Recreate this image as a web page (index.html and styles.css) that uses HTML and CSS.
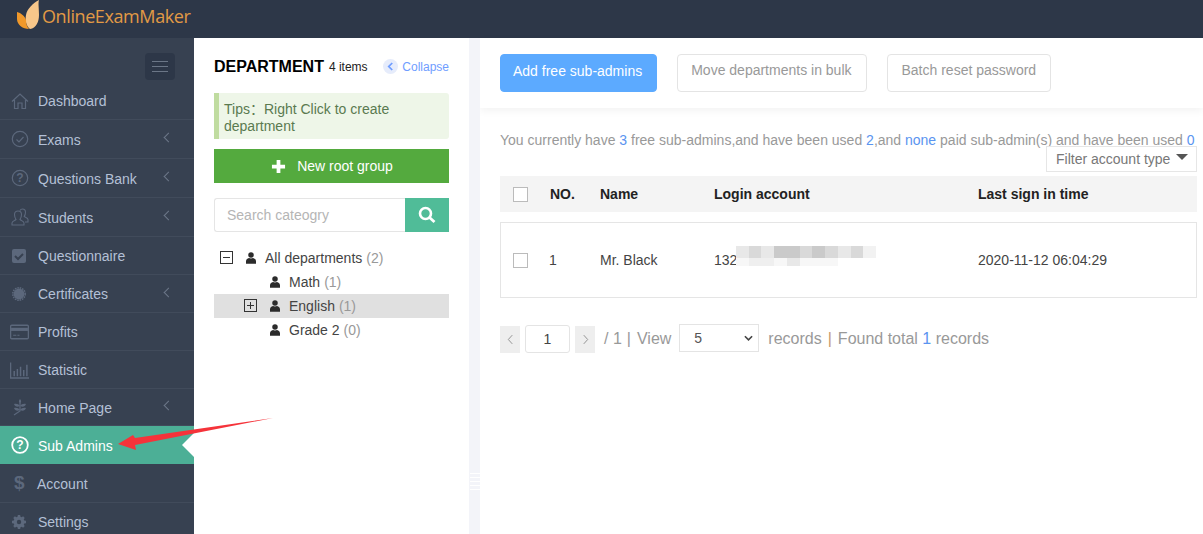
FILE: index.html
```html
<!DOCTYPE html>
<html lang="en">
<head>
<meta charset="utf-8">
<title>Sub Admins - OnlineExamMaker</title>
<link rel="stylesheet" href="styles.css">
</head>
<body>
<div class="app">
  <header class="topbar">
    <svg class="logo-mark" viewBox="0 0 24 29" width="24" height="29"><path d="M14 29C20 28 23 22 23 15 23 8 22 3 23 0 17 3 11 9 10 15 9 20 10 26 14 29Z" fill="#f8c78a"/><path d="M1 12C5 13 9 16 10 20 10 24 11 27 13 29 7 29 1 25 1 19 1 16 1 14 1 12Z" fill="#f0982a"/></svg>
    <span class="logo-text">OnlineExamMaker</span>
  </header>
  <div class="body">
    <nav class="sidebar">
      <div class="toggle-wrap">
        <div class="toggle"><span></span><span></span><span></span></div>
      </div>
      <ul class="menu">
        <li class="item"><svg class="ico" viewBox="0 0 18 18"><path d="M1 9.500 9 2l8 7.500M3.500 8v8.500h3.500V11h4v5.500h3.500V8" fill="none" stroke="#5c687c" stroke-width="1.200"/></svg>Dashboard</li>
        <li class="item low"><svg class="ico" viewBox="0 0 18 18"><circle cx="9" cy="9" r="7.700" fill="none" stroke="#5c687c" stroke-width="1.200"/><path d="M5.500 9.500 8 12l4.500-5" fill="none" stroke="#5c687c" stroke-width="1.200"/></svg>Exams<span class="chev"></span></li>
        <li class="item low"><svg class="ico" viewBox="0 0 18 18"><circle cx="9" cy="9" r="7.700" fill="none" stroke="#5c687c" stroke-width="1.200"/><text x="9" y="13" class="q-mark">?</text></svg>Questions Bank<span class="chev"></span></li>
        <li class="item low"><svg class="ico" viewBox="0 0 18 18"><path d="M1 17v-2c0-2 3-2.500 4-3.500C4 10 3.500 8.500 3.500 6.500 3.500 4 5 3 7 3s3.500 1 3.500 3.500c0 2-.5 3.500-1.500 5 1 1 4 1.500 4 3.500v2ZM9 2.500C9.500 1.500 10.500 1 11.500 1c2 0 3 1.200 3 3.200 0 1.800-.5 3-1.300 4.200.8.800 3.800 1.300 3.800 3.100V14h-3" fill="none" stroke="#5c687c" stroke-width="1.100"/></svg>Students<span class="chev"></span></li>
        <li class="item"><svg class="ico ico-sm" viewBox="2 2 14 14"><rect x="2" y="2" width="14" height="14" rx="2" fill="#5c687c"/><path d="M5 9l3 3 5-5" fill="none" stroke="#374151" stroke-width="2"/></svg>Questionnaire</li>
        <li class="item"><svg class="ico ico-sm" viewBox="0 0 18 18"><circle cx="9" cy="9" r="7" fill="#5c687c"/><circle cx="9" cy="9" r="8" fill="none" stroke="#5c687c" stroke-width="2" stroke-dasharray="2 1.140"/></svg>Certificates<span class="chev"></span></li>
        <li class="item"><svg class="ico ico-wide" viewBox="0 0 18 14"><rect x=".6" y=".6" width="16.800" height="12.800" rx="1" fill="none" stroke="#5c687c" stroke-width="1.200"/><rect x="1" y="3" width="16" height="3" fill="#5c687c"/><path d="M3 10h3M7 10h2" stroke="#5c687c"/></svg>Profits</li>
        <li class="item"><svg class="ico ico-wide" viewBox="0 0 18 16"><path d="M.5 1v14.500H18M4 14V9M7 14V7M10 14V5M13 14V8M16 14V3" fill="none" stroke="#5c687c" stroke-width="1.400"/></svg>Statistic</li>
        <li class="item low"><svg class="ico" viewBox="0 0 18 18"><path d="M9 1c1.500 1.500 1.500 3 0 5C7.500 4 7.500 2.500 9 1ZM9 8c1.500-2 3.500-2.500 6-2-1 2.500-3 3.500-6 2ZM9 8C7.500 6 5.500 5.500 3 6c1 2.500 3 3.500 6 2ZM9 12c1.500-2 3.500-2.500 6-2-1 2.500-3 3.500-6 2ZM9 12c-1.500-2-3.500-2.500-6-2 1 2.500 3 3.500 6 2Z" fill="#5c687c"/><path d="M9 5v8L3 17" fill="none" stroke="#5c687c" stroke-width="1.200"/></svg>Home Page<span class="chev"></span></li>
        <li class="item active low"><svg class="ico" viewBox="0 0 18 18"><circle cx="9" cy="9" r="7.800" fill="none" stroke="#fff" stroke-width="1.800"/><text x="9" y="13.200" class="q-mark q-white">?</text></svg>Sub Admins</li>
        <li class="item item-account low"><span class="dollar">$</span>Account</li>
        <li class="item"><svg class="ico ico-sm" viewBox="0 0 18 18"><path d="M7.500 0h3l.4 2.300 1.500.6 1.900-1.300 2.100 2.100-1.300 1.900.6 1.500 2.300.4v3l-2.300.4-.6 1.500 1.300 1.900-2.100 2.100-1.900-1.300-1.500.6-.4 2.300h-3l-.4-2.300-1.500-.6-1.900 1.300-2.100-2.100 1.300-1.900-.6-1.500L0 10.500v-3l2.300-.4.6-1.500L1.600 3.700l2.100-2.100 1.900 1.300 1.500-.6Z" fill="#5c687c"/><circle cx="9" cy="9" r="2.800" fill="#374151"/></svg>Settings</li>
      </ul>
    </nav>

    <aside class="panel">
      <div class="panel-head">
        <h2 class="panel-title">DEPARTMENT</h2>
        <span class="panel-count">4 items</span>
        <span class="collapse"><span class="collapse-dot"><svg viewBox="0 0 8 10" width="7" height="9"><path d="M6 1 2 5l4 4" fill="none" stroke="#6f9dff" stroke-width="2"/></svg></span>Collapse</span>
      </div>
      <div class="tips">Tips：Right Click to create department</div>
      <button class="new-root"><svg viewBox="0 0 16 16" width="15" height="15"><path d="M8 1v14M1 8h14" stroke="#fff" stroke-width="4"/></svg>New root group</button>
      <div class="search">
        <div class="search-input">Search cateogry</div>
        <div class="search-btn"><svg viewBox="0 0 18 18" width="18" height="18"><circle cx="7.500" cy="7.500" r="5.500" fill="none" stroke="#fff" stroke-width="2.600"/><path d="M11.500 11.500 16.500 16" stroke="#fff" stroke-width="2.800"/></svg></div>
      </div>
      <ul class="tree">
        <li class="node node-root"><span class="box"><span class="box-h"></span></span><svg class="user" viewBox="0 0 12 14"><ellipse cx="6" cy="3.300" rx="3.300" ry="3.300" fill="#2b2b2b"/><path d="M0 14V11C0 8.500 2 7.500 3.500 7L6 7.500 8.500 7C10 7.500 12 8.500 12 11V14Z" fill="#2b2b2b"/></svg><span class="node-name">All departments</span><span class="node-num">(2)</span></li>
        <li class="node"><svg class="user" viewBox="0 0 12 14"><ellipse cx="6" cy="3.300" rx="3.300" ry="3.300" fill="#2b2b2b"/><path d="M0 14V11C0 8.500 2 7.500 3.500 7L6 7.500 8.500 7C10 7.500 12 8.500 12 11V14Z" fill="#2b2b2b"/></svg><span class="node-name">Math</span><span class="node-num">(1)</span></li>
        <li class="node node-sel"><span class="box box-child"><span class="box-h"></span><span class="box-v"></span></span><svg class="user" viewBox="0 0 12 14"><ellipse cx="6" cy="3.300" rx="3.300" ry="3.300" fill="#2b2b2b"/><path d="M0 14V11C0 8.500 2 7.500 3.500 7L6 7.500 8.500 7C10 7.500 12 8.500 12 11V14Z" fill="#2b2b2b"/></svg><span class="node-name">English</span><span class="node-num">(1)</span></li>
        <li class="node"><svg class="user" viewBox="0 0 12 14"><ellipse cx="6" cy="3.300" rx="3.300" ry="3.300" fill="#2b2b2b"/><path d="M0 14V11C0 8.500 2 7.500 3.500 7L6 7.500 8.500 7C10 7.500 12 8.500 12 11V14Z" fill="#2b2b2b"/></svg><span class="node-name">Grade 2</span><span class="node-num">(0)</span></li>
      </ul>
    </aside>

    <div class="splitter"><div class="grip"></div></div>

    <main class="main">
      <div class="toolbar">
        <button class="btn btn-primary">Add free sub-admins</button>
        <button class="btn">Move departments in bulk</button>
        <button class="btn btn-batch">Batch reset password</button>
      </div>
      <div class="content">
        <p class="notice">You currently have <b>3</b> free sub-admins,and have been used <b>2</b>,and <b>none</b> paid sub-admin(s) and have been used <b>0</b></p>
        <div class="filter-row"><div class="filter">Filter account type<span class="caret"></span></div></div>
        <div class="thead">
          <span class="cell c-check"><span class="check"></span></span>
          <span class="cell c-no">NO.</span>
          <span class="cell c-name">Name</span>
          <span class="cell c-login">Login account</span>
          <span class="cell">Last sign in time</span>
        </div>
        <div class="trow">
          <span class="cell c-check"><span class="check"></span></span>
          <span class="cell c-no">1</span>
          <span class="cell c-name">Mr. Black</span>
          <span class="cell c-login">132<span class="mosaic"><i></i><i></i><i></i><i></i><i></i><i></i><i></i><i></i><i></i><i></i><i></i><i></i><i></i><i></i><i></i><i></i><i></i><i></i><i></i><i></i><i></i><i></i></span></span>
          <span class="cell">2020-11-12 06:04:29</span>
        </div>
        <div class="pager">
          <span class="pg-arrow"><svg viewBox="0 0 8 12" width="7" height="11"><path d="M6 1 1.500 6 6 11" fill="none" stroke="#888"/></svg></span>
          <span class="pg-input">1</span>
          <span class="pg-arrow"><svg viewBox="0 0 8 12" width="7" height="11"><path d="M2 1l4.500 5L2 11" fill="none" stroke="#888"/></svg></span>
          <span class="pg-of">/ 1</span><span class="pg-sep">|</span><span>View</span>
          <span class="pg-select">5<svg viewBox="0 0 10 6" width="9" height="6"><path d="M1 1l4 4 4-4" fill="none" stroke="#444" stroke-width="1.800"/></svg></span>
          <span>records</span><span class="pg-sep pg-sep-tan">|</span><span>Found total <b>1</b> records</span>
        </div>
      </div>
    </main>
  </div>
  <svg class="arrow" viewBox="0 0 160 36" width="160" height="36"><path d="M157 1 19 21 17 18 2 27 20 33 19 28Z" fill="#f5333a"/></svg>
</div>
</body>
</html>
```
FILE: styles.css
```css
* { box-sizing: border-box; }
html, body { margin: 0; padding: 0; height: 100%; overflow: hidden; }
body { font-family: "Liberation Sans", "Noto Sans CJK SC", Arial, sans-serif; font-size: 14px; color: #333; background: #fff; }
ul { list-style: none; margin: 0; padding: 0; }

.app { position: relative; height: 534px; overflow: hidden; display: flex; flex-direction: column; }

.topbar { flex: none; height: 38px; background: #2d3748; display: flex; align-items: flex-start; padding-left: 16px; overflow: hidden; }
.logo-mark { flex: none; margin-right: 2px; }
.logo-text { font-family: "Open Sans", sans-serif; font-size: 18px; line-height: 32px; color: #e29a45; letter-spacing: -.4px; }

.body { flex: 1; display: flex; min-height: 0; }

.sidebar { flex: none; width: 194px; background: #374151; color: #b4c0d6; }
.toggle-wrap { height: 44px; padding: 15px 19px 0 0; display: flex; justify-content: flex-end; }
.toggle { width: 30px; height: 27px; background: #2d3748; border-radius: 4px; display: flex; flex-direction: column; justify-content: center; gap: 4px; padding: 0 7px; }
.toggle span { display: block; height: 1px; background: #6b7687; }
.menu { display: grid; grid-template-rows: 38px 39px 39px 39px 38px 38px 38px 38px 37px 38px 39px 38px; }
.item { position: relative; display: flex; align-items: center; padding-left: 38px; border-bottom: 1px solid #414b5b; }
.low { padding-top: 2px; }
.ico { position: absolute; left: 11px; top: 50%; width: 18px; height: 18px; margin-top: -9px; }
.ico-wide { left: 10px; width: 19px; }
.ico-sm { left: 12px; width: 14px; height: 14px; margin-top: -7px; }
.q-mark { font: bold 12px "Liberation Sans", sans-serif; fill: #5c687c; text-anchor: middle; }
.q-white { fill: #fff; }
.chev { position: absolute; right: 22px; top: 50%; width: 7px; height: 7px; margin-top: -5px; border-left: 1px solid #6c7789; border-bottom: 1px solid #6c7789; transform: rotate(45deg); }
.active { background: #4caf96; color: #fff; border-bottom: 0; }
.active::after { content: ""; position: absolute; right: 0; top: 50%; margin-top: -12px; border: 12px solid transparent; border-left: 0; border-right-color: #fff; }
.item-account { padding-left: 37px; }
.dollar { position: absolute; left: 14px; top: 50%; margin-top: -12px; font-size: 19px; line-height: 24px; font-weight: bold; color: #5c687c; }

.panel { flex: none; width: 275px; padding: 0 20px; }
.panel-head { height: 55px; display: flex; align-items: center; padding-top: 2px; }
.panel-title { margin: 0 5px 0 0; font-size: 16px; font-weight: bold; color: #000; }
.panel-count { font-size: 12px; color: #222; }
.collapse { margin-left: auto; display: flex; align-items: center; font-size: 12px; color: #6f9dff; }
.collapse-dot { width: 15px; height: 15px; margin-right: 4px; border-radius: 50%; background: #e6ecfb; display: flex; align-items: center; justify-content: center; }
.tips { height: 46px; background: #eef6e8; border-left: 5px solid #c0dca0; border-radius: 0 3px 3px 0; padding: 8px 0 0 5px; line-height: 17px; color: #5a7a50; }
.new-root { display: flex; width: 100%; height: 34px; margin-top: 10px; align-items: center; justify-content: center; gap: 11px; padding: 0 0 0 1px; border: 0; background: #54aa3e; color: #fff; font: 14px "Liberation Sans", sans-serif; }
.search { display: flex; height: 34px; margin-top: 15px; }
.search-input { flex: 1; border: 1px solid #e5e5e5; border-right: 0; border-radius: 3px 0 0 3px; padding-left: 12px; line-height: 32px; color: #b5b5b5; }
.search-btn { flex: none; width: 44px; background: #50bc98; display: flex; align-items: center; justify-content: center; }
.tree { margin-top: 14px; }
.node { height: 24px; display: flex; align-items: center; padding-left: 56px; position: relative; color: #444; }
.node-root { padding-left: 32px; }
.node-sel { background: #e0e0e0; }
.user { width: 10px; height: 12px; margin-right: 9px; flex: none; }
.node-num { margin-left: 4px; color: #999; }
.box { position: absolute; left: 6px; top: 5px; width: 13px; height: 13px; border: 1px solid #333; }
.box-child { left: 30px; }
.box-h { position: absolute; left: 2px; right: 2px; top: 5px; height: 1px; background: #333; }
.box-v { position: absolute; top: 2px; bottom: 2px; left: 5px; width: 1px; background: #333; }

.splitter { flex: none; width: 11px; background: #f3f4f9; position: relative; }
.grip { position: absolute; left: 1px; right: 0; top: 435px; height: 20px; background: repeating-linear-gradient(to bottom, #fff 0, #fff 1px, #f3f4f9 1px, #f3f4f9 4px); }

.main { flex: 1; min-width: 0; }
.toolbar { height: 70px; display: flex; align-items: flex-start; gap: 20px; padding: 16px 0 0 20px; box-shadow: 0 3px 8px rgba(0, 0, 0, .05); }
.btn { height: 38px; padding: 0 14px 6px 13px; border: 1px solid #e4e4e4; border-radius: 4px; background: #fff; color: #999; font: 14px "Liberation Sans", sans-serif; }
.btn-primary { background: #5caaff; border-color: #5caaff; color: #fff; padding: 0 14px 4px 12px; }
.btn-batch { padding-left: 14px; }
.content { padding: 22px 6px 0 20px; }
.notice { margin: 0; height: 20px; line-height: 20px; white-space: nowrap; color: #999; }
.notice b { font-weight: normal; color: #5a94f0; }
.filter-row { display: flex; justify-content: flex-end; margin-top: -4px; position: relative; }
.filter { width: 151px; height: 26px; border: 1px solid #e6e6e6; background: #fff; padding-left: 9px; line-height: 25px; color: #777; position: relative; }
.caret { position: absolute; right: 8px; top: 7px; border: 6px solid transparent; border-top: 6px solid #555; border-bottom: 0; }
.thead, .trow { display: flex; align-items: center; }
.thead { height: 36px; margin-top: 4px; background: #f4f4f4; font-weight: bold; color: #222; }
.trow { height: 76px; margin-top: 10px; border: 1px solid #e5e5e5; color: #444; }
.c-check { width: 50px; padding-left: 13px; display: flex; }
.trow .c-check { padding-left: 13px; width: 48px; }
.c-no { width: 50px; }
.trow .c-no { width: 51px; }
.c-name { width: 114px; }
.c-login { width: 264px; position: relative; }
.check { display: block; width: 15px; height: 15px; border: 1px solid #bbb; background: #fff; }
.trow .c-check .check { margin-left: -1px; }
.mosaic { position: absolute; left: 22px; top: -6px; width: 140px; display: grid; grid-template-columns: repeat(11, 1fr); grid-template-rows: 12px 8px; }
.mosaic i { background: #d9d9d9; }
.mosaic i:nth-child(odd) { background: #e8e8e8; }
.mosaic i:nth-child(4), .mosaic i:nth-child(5), .mosaic i:nth-child(7) { background: #cacaca; }
.mosaic i:nth-child(11) { background: #f2f2f2; }
.mosaic i:nth-child(n+12) { background: #f7f7f7; }
.mosaic i:nth-child(n+20) { background: transparent; }
.mosaic i:nth-child(13), .mosaic i:nth-child(14) { background: #efefef; }
.mosaic i:nth-child(16) { background: #e8e8e8; }
.pager { display: flex; align-items: center; height: 28px; margin-top: 27px; font-size: 16px; color: #999; }
.pager b { font-weight: normal; color: #5a94f0; }
.pg-arrow { width: 20px; height: 27px; background: #eee; display: flex; align-items: center; justify-content: center; }
.pg-input { width: 45px; height: 28px; margin: 0 5px; border: 1px solid #e4e4e4; border-radius: 3px; text-align: center; line-height: 26px; font-size: 14px; color: #444; }
.pg-of { margin-left: 9px; }
.pg-sep { margin: 0 6px 0 5px; }
.pg-sep-tan { margin: 0 6px; color: #c49a6c; }
.pg-select { display: flex; align-items: center; justify-content: space-between; width: 80px; height: 28px; margin: 0 9px 2px 8px; padding: 0 5px 0 14px; border: 1px solid #e4e4e4; font-size: 14px; color: #555; }

.arrow { position: absolute; left: 116px; top: 417px; }
```
